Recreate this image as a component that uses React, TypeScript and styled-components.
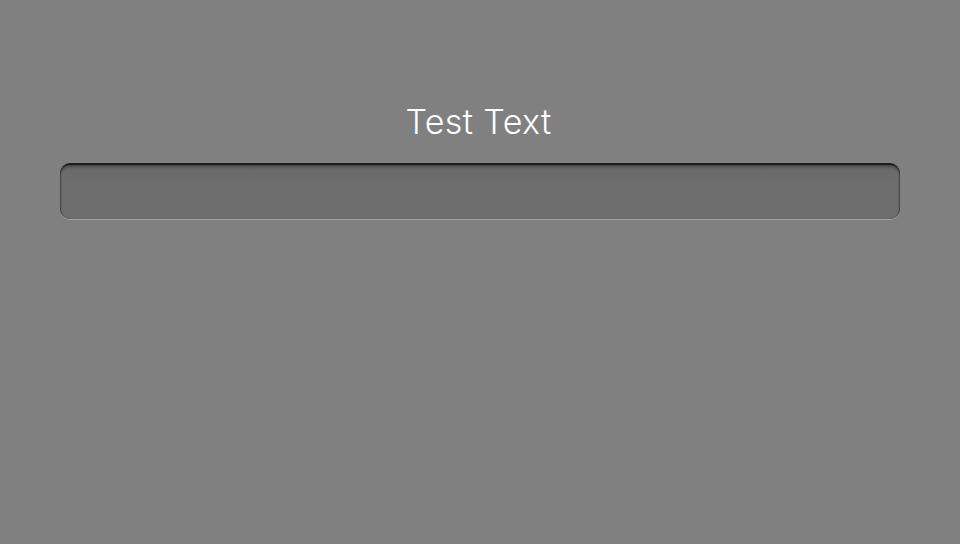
import React from "react";
import styled, { createGlobalStyle } from "styled-components";

const Global = createGlobalStyle`
  html, body { margin: 0; padding: 0; background: #808080; }
  body { font-family: Inter, "Noto Sans", sans-serif; }
`;

const Page = styled.div`
  width: 960px;
  height: 544px;
  background: #808080;
  display: flex;
  flex-direction: column;
  align-items: center;
  padding: 100px 60px 0;
  box-sizing: border-box;
`;

const Title = styled.div`
  color: #ffffff;
  font-size: 34px;
  font-weight: 300;
  line-height: 44px;
  letter-spacing: 0.4px;
  margin-right: 3px;
`;

const Field = styled.div`
  margin-top: 19px;
  width: 100%;
  height: 56px;
  box-sizing: border-box;
  border-radius: 10px;
  background: linear-gradient(#696969, #6e6e6e 30%, #6e6e6e);
  border-top: 2px solid #1e1e1e;
  box-shadow:
    0 1px 0 rgba(255, 255, 255, 0.3),
    inset 0 2px 3px rgba(0, 0, 0, 0.3),
    inset 1px 0 1px rgba(0, 0, 0, 0.3),
    inset -1px 0 1px rgba(0, 0, 0, 0.3);
`;

export default function App() {
  return (
    <>
      <Global />
      <Page>
        <Title>Test Text</Title>
        <Field />
      </Page>
    </>
  );
}
